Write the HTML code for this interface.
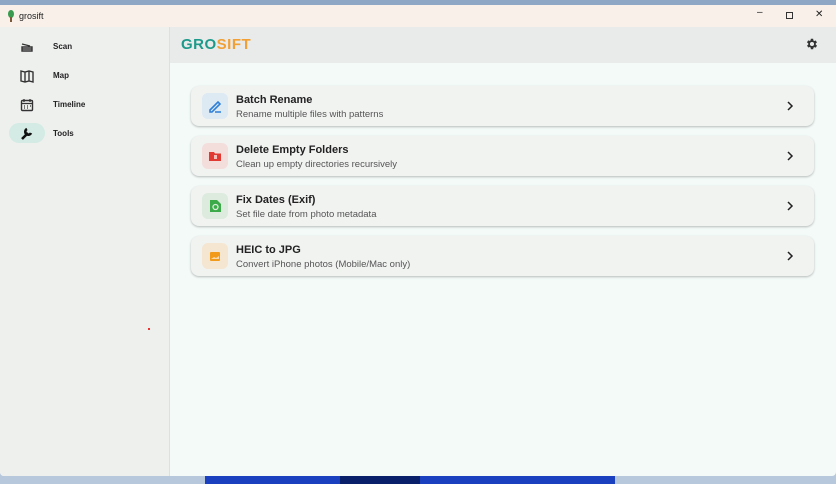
<!DOCTYPE html>
<html><head><style>
*{margin:0;padding:0;box-sizing:border-box}
body{width:836px;height:484px;overflow:hidden;font-family:"Liberation Sans",sans-serif;background:#b8c8dc;position:relative}
.top{position:absolute;left:0;top:0;width:836px;height:5px;background:#8ea7c4}
.desk{position:absolute;left:205px;top:474px;width:410px;height:10px;background:#1a3fbf}
.desk2{position:absolute;left:340px;top:474px;width:80px;height:10px;background:#0a1f6a}
.win{position:absolute;left:0;top:5px;width:836px;height:471px;background:#f3faf8;border-radius:0 0 4px 4px;overflow:hidden}
.title{position:absolute;left:0;top:0;width:836px;height:22px;background:#f9f0ea;font-size:9px;color:#222}
.side{position:absolute;left:0;top:22px;width:170px;height:449px;background:#eef0ee;border-right:1px solid #dde0de}
.head{position:absolute;left:170px;top:22px;width:666px;height:36px;background:#e8ebea}
.nav{position:absolute;left:0;height:22px;width:170px;font-size:8px;color:#222;font-weight:bold}
.nav span{position:absolute;left:53px;top:7px}
.nav svg{position:absolute;left:20px;top:5px}
.card{position:absolute;left:191px;width:623px;height:40px;background:#f1f3f1;border-radius:8px;box-shadow:0 1px 2px rgba(0,0,0,.25)}
.ic{position:absolute;left:11px;top:7px;width:26px;height:26px;border-radius:6px}
.t1{position:absolute;left:45px;top:8px;font-size:11px;font-weight:bold;color:#222}
.t2{position:absolute;left:45px;top:23px;font-size:9.5px;color:#555}
.ch{position:absolute;right:20px;top:15px}
</style></head><body>
<div class="top"></div>
<div class="desk"></div><div class="desk2"></div>
<div class="win">
<div class="title">
<svg style="position:absolute;left:6px;top:5px" width="10" height="12"><ellipse cx="5" cy="4" rx="3" ry="4" fill="#3a9a50"/><rect x="4" y="7" width="2" height="5" fill="#7a5a3a"/></svg>
<span style="position:absolute;left:19px;top:6px">grosift</span>
<span style="position:absolute;left:757px;top:2px;font-size:10px">–</span>
<div style="position:absolute;left:786px;top:7px;width:7px;height:7px;border:1px solid #333"></div>
<span style="position:absolute;left:815px;top:4px;font-size:10px">✕</span>
</div>
<div class="side">
<div class="nav" style="top:8px"><svg width="14" height="14"><path d="M2 4l8 2M2 7h10v4H2z M2 9h10" stroke="#333" stroke-width="1.4" fill="none"/></svg><span>Scan</span></div>
<div class="nav" style="top:37px"><svg width="14" height="14"><path d="M1 2l4 1 4-1 4 1v10l-4-1-4 1-4-1z M5 3v10 M9 2v10" stroke="#333" stroke-width="1.4" fill="none"/></svg><span>Map</span></div>
<div class="nav" style="top:66px"><svg width="14" height="14"><rect x="1.5" y="2.5" width="11" height="10" rx="1" stroke="#333" stroke-width="1.4" fill="none"/><path d="M1.5 5.5h11M4 1v3M10 1v3M4 8h1M7 8h1M10 8h1M4 10h1M7 10h1" stroke="#333" stroke-width="1.3"/></svg><span>Timeline</span></div>
<div style="position:absolute;left:9px;top:96px;width:36px;height:20px;border-radius:10px;background:#d3ebe4"></div>
<div class="nav" style="top:95px"><svg width="14" height="14"><path d="M2 12l6-6M7 2a3 3 0 104 4" stroke="#111" stroke-width="2.6" fill="none"/></svg><span>Tools</span></div>
<div style="position:absolute;left:148px;top:301px;width:2px;height:2px;background:#e33"></div>
</div>
<div class="head">
<span style="position:absolute;left:11px;top:9px;font-size:15px;font-weight:bold;letter-spacing:0.5px"><span style="color:#1d9a8a">GRO</span><span style="color:#f2a033">SIFT</span></span>
<svg style="position:absolute;left:635px;top:10px" width="14" height="14" viewBox="0 0 24 24"><path fill="#333" d="M19.4 13a7.5 7.5 0 000-2l2.1-1.6-2-3.5-2.5 1a7 7 0 00-1.7-1L15 3h-4l-.4 2.7a7 7 0 00-1.7 1l-2.5-1-2 3.5L6.6 11a7.5 7.5 0 000 2l-2.1 1.6 2 3.5 2.5-1a7 7 0 001.7 1L11 21h4l.4-2.7a7 7 0 001.7-1l2.5 1 2-3.5zM13 15.5a3.5 3.5 0 110-7 3.5 3.5 0 010 7z" transform="translate(-1 0)"/></svg>
</div>
<div class="card" style="top:81px"><div class="ic" style="background:#dde9f3"><svg width="26" height="26"><path d="M8 17l8-8 2 2-8 8H8z M13 19h6" stroke="#2f7fd8" stroke-width="1.6" fill="none"/></svg></div><div class="t1">Batch Rename</div><div class="t2">Rename multiple files with patterns</div><svg class="ch" width="8" height="10"><path d="M2 1l4 4-4 4" stroke="#222" stroke-width="1.5" fill="none"/></svg></div>
<div class="card" style="top:131px"><div class="ic" style="background:#f3dedb"><svg width="26" height="26"><path d="M7 9h5l1 1.5h6V18H7z" fill="#e03a32"/><rect x="12" y="12" width="3" height="4" fill="#f3c0bc"/></svg></div><div class="t1">Delete Empty Folders</div><div class="t2">Clean up empty directories recursively</div><svg class="ch" width="8" height="10"><path d="M2 1l4 4-4 4" stroke="#222" stroke-width="1.5" fill="none"/></svg></div>
<div class="card" style="top:181px"><div class="ic" style="background:#dcebdd"><svg width="26" height="26"><path d="M8 7h7l4 4v8H8z" fill="#3daa4a"/><circle cx="13.5" cy="14" r="2.5" stroke="#dcebdd" stroke-width="1.3" fill="none"/></svg></div><div class="t1">Fix Dates (Exif)</div><div class="t2">Set file date from photo metadata</div><svg class="ch" width="8" height="10"><path d="M2 1l4 4-4 4" stroke="#222" stroke-width="1.5" fill="none"/></svg></div>
<div class="card" style="top:231px"><div class="ic" style="background:#f5e6d2"><svg width="26" height="26"><rect x="8" y="9" width="10" height="9" rx="1" fill="#f29a1a"/><path d="M9 16l3-2 2 1 3-2v3H9z" fill="#fbd9a8"/></svg></div><div class="t1">HEIC to JPG</div><div class="t2">Convert iPhone photos (Mobile/Mac only)</div><svg class="ch" width="8" height="10"><path d="M2 1l4 4-4 4" stroke="#222" stroke-width="1.5" fill="none"/></svg></div>
</div>
</body></html>
